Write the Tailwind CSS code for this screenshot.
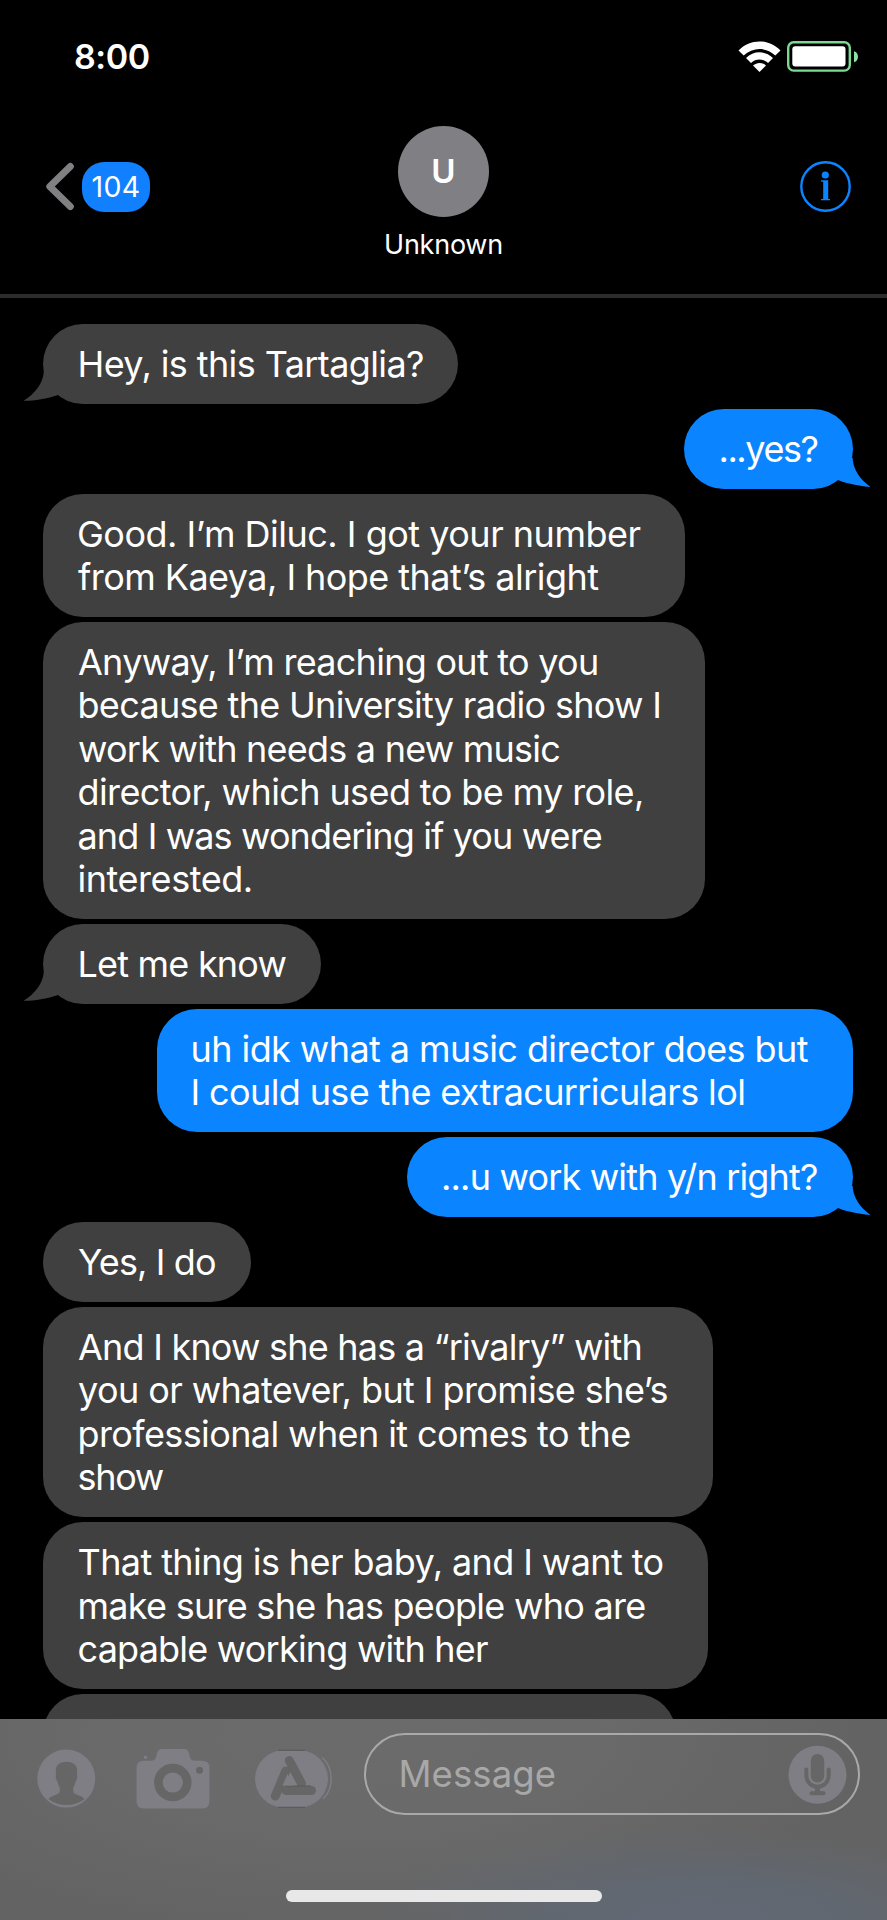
<!DOCTYPE html>
<html lang="en">
<head>
<meta charset="utf-8">
<title>Messages</title>
<script src="https://cdn.jsdelivr.net/npm/@tailwindcss/browser@4"></script>
</head>
<body class="bg-black text-white font-['Inter','Liberation_Sans',sans-serif]">
<div class="flex h-[1920px] w-[887px] flex-col overflow-hidden bg-black">

  <!-- Status bar -->
  <header class="flex h-[298px] shrink-0 flex-col border-b-[4px] border-[#2c2c2e]">
    <div class="flex h-[126px] items-start justify-between pl-[74px] pr-[28px]">
      <span class="mt-[36px] text-[34px] leading-[41px] font-semibold tracking-[-0.4px]">8:00</span>
      <div class="mt-[41px] flex gap-[6px]">
        <svg class="h-[31px] w-[43px]" viewBox="0 0 43 31" fill="#fff">
          <path d="M0.5 9.5C12 -2.6 31 -2.6 42.5 9.5L37.3 14.6C28.4 5.8 14.6 5.8 5.7 14.6Z"/>
          <path d="M8 17C15.6 9.4 27.4 9.4 35 17L30 22C25.2 17.4 17.8 17.4 13 22Z"/>
          <path d="M15 24.5C19 21 24 21 28 24.5L21.5 31Z"/>
        </svg>
        <svg class="h-[31px] w-[72px]" viewBox="0 0 72 31">
          <rect x="1.2" y="1.2" width="61.6" height="28.4" rx="5.5" fill="none" stroke="#7bd993" stroke-width="2.4"/>
          <rect x="5.3" y="5.2" width="53.2" height="20.2" rx="3" fill="#fff"/>
          <path d="M67 10.2C72.3 11.5 72.3 20 67 21.2Z" fill="#8be3a1"/>
        </svg>
      </div>
    </div>

    <!-- Conversation header -->
    <div class="grid grid-cols-[1fr_200px_1fr]">
      <div class="flex items-start pt-[35px] pl-[45px]">
        <svg class="mt-[1px] h-[49px] w-[30px]" viewBox="0 0 30 49" fill="none" stroke="#808083" stroke-width="7" stroke-linecap="round" stroke-linejoin="round"><path d="M25.3 4.5L4.8 24.5L25.3 44.5"/></svg>
        <span class="mt-[1px] ml-[7px] flex h-[50px] w-[68px] items-center justify-center rounded-[22px] bg-[#1180ff] text-[28.5px] tracking-[0.3px]">104</span>
      </div>
      <div class="flex flex-col items-center">
        <div class="flex h-[91px] w-[91px] items-center justify-center rounded-full bg-[#807f84] text-[33px] font-semibold">U</div>
        <div class="mt-[11px] text-[27px] leading-[33px] tracking-[-0.25px] whitespace-nowrap">Unknown</div>
      </div>
      <div class="flex justify-end pt-[35px] pr-[36px]">
        <svg class="h-[51px] w-[51px]" viewBox="0 0 51 51">
          <circle cx="25.5" cy="25.5" r="24.2" fill="none" stroke="#0a84ff" stroke-width="2.4"/>
          <circle cx="25.3" cy="14" r="3.6" fill="#0a84ff"/>
          <path d="M21 19.2H28.2V37.4Q28.2 38 30 38V39.2H21V38Q23.2 38 23.2 37.4V21Q23.2 20.4 21 20.4Z" fill="#0a84ff"/>
        </svg>
      </div>
    </div>
  </header>

  <!-- Messages -->
  <main class="flex h-[1421px] shrink-0 flex-col gap-[4.8px] overflow-hidden pt-[26px] pr-[34px] pl-[43px] text-[36px] leading-[43.5px] whitespace-nowrap">
    <div class="relative w-[414.5px] shrink-0 rounded-[40px] bg-[#404040] pt-[19px] pb-[17.5px] pl-[34.5px]">
      <svg class="absolute top-[46px] left-[-20px] h-[32px] w-[38px]" viewBox="0 0 38 32" fill="#404040"><path d="M20.8 2C20 13 12 24 0.5 30.8C10 31 24 29 35 25L38 2Z"/></svg>
      <p class="relative tracking-[-0.6px]">Hey, is this Tartaglia?</p>
    </div>
    <div class="relative w-[169px] shrink-0 self-end rounded-[40px] bg-[#0b84ff] pt-[19px] pb-[17.5px] pl-[34.5px]">
      <svg class="absolute top-[46px] right-[-18px] h-[34px] w-[36px]" viewBox="0 0 36 34" fill="#0b84ff"><path d="M17.6 3C18 13 24 24 35.5 32C28 31.5 12 29 3 25L0 3Z"/></svg>
      <p class="relative tracking-[-1.439px]">...yes?</p>
    </div>
    <div class="w-[641.5px] shrink-0 rounded-[40px] bg-[#404040] pt-[19px] pb-[17.5px] pl-[34px]">
      <p class="tracking-[-0.496px]">Good. I’m Diluc. I got your number</p>
      <p class="pl-[1px] tracking-[-0.55px]">from Kaeya, I hope that’s alright</p>
    </div>
    <div class="w-[662px] shrink-0 rounded-[40px] bg-[#404040] pt-[19px] pb-[17.5px] pl-[34px]">
      <p class="pl-[1px] tracking-[-0.722px]">Anyway, I’m reaching out to you</p>
      <p class="pl-[0.5px] tracking-[-0.69px]">because the University radio show I</p>
      <p class="pl-[1px] tracking-[-0.77px]">work with needs a new music</p>
      <p class="pl-[0.5px] tracking-[-0.6px]">director, which used to be my role,</p>
      <p class="pl-[0.5px] tracking-[-0.88px]">and I was wondering if you were</p>
      <p class="pl-[0.5px] tracking-[-0.45px]">interested.</p>
    </div>
    <div class="relative w-[278px] shrink-0 rounded-[40px] bg-[#404040] pt-[19px] pb-[17.5px] pl-[34.5px]">
      <svg class="absolute top-[46px] left-[-20px] h-[32px] w-[38px]" viewBox="0 0 38 32" fill="#404040"><path d="M20.8 2C20 13 12 24 0.5 30.8C10 31 24 29 35 25L38 2Z"/></svg>
      <p class="relative tracking-[-0.786px]">Let me know</p>
    </div>
    <div class="w-[696.5px] shrink-0 self-end rounded-[40px] bg-[#0b84ff] pt-[19px] pb-[17.5px] pl-[34px]">
      <p class="tracking-[-0.57px]">uh idk what a music director does but</p>
      <p class="tracking-[-0.62px]">I could use the extracurriculars lol</p>
    </div>
    <div class="relative w-[446.5px] shrink-0 self-end rounded-[40px] bg-[#0b84ff] pt-[19px] pb-[17.5px] pl-[34.5px]">
      <svg class="absolute top-[46px] right-[-18px] h-[34px] w-[36px]" viewBox="0 0 36 34" fill="#0b84ff"><path d="M17.6 3C18 13 24 24 35.5 32C28 31.5 12 29 3 25L0 3Z"/></svg>
      <p class="relative tracking-[-0.826px]">...u work with y/n right?</p>
    </div>
    <div class="w-[208px] shrink-0 rounded-[40px] bg-[#404040] pt-[19px] pb-[17.5px] pl-[35px]">
      <p class="tracking-[-0.875px]">Yes, I do</p>
    </div>
    <div class="w-[669.5px] shrink-0 rounded-[40px] bg-[#404040] pt-[19px] pb-[17.5px] pl-[34px]">
      <p class="pl-[1px] tracking-[-0.778px]">And I know she has a “rivalry” with</p>
      <p class="pl-[1px] tracking-[-0.58px]">you or whatever, but I promise she’s</p>
      <p class="pl-[0.5px] tracking-[-0.61px]">professional when it comes to the</p>
      <p class="pl-[0.5px] tracking-[-1.3px]">show</p>
    </div>
    <div class="w-[665px] shrink-0 rounded-[40px] bg-[#404040] pt-[19px] pb-[17.5px] pl-[34px]">
      <p class="pl-[0.5px] tracking-[-0.598px]">That thing is her baby, and I want to</p>
      <p class="pl-[0.5px] tracking-[-0.73px]">make sure she has people who are</p>
      <p class="pl-[0.5px] tracking-[-0.792px]">capable working with her</p>
    </div>
    <div class="h-[167px] w-[633px] shrink-0 rounded-[40px] bg-[#404040]"></div>
  </main>

  <!-- Composer -->
  <footer class="flex h-[201px] shrink-0 flex-col items-center bg-[#636363] bg-[radial-gradient(ellipse_330px_90px_at_700px_201px,#616975_0%,#616975cc_40%,transparent_100%),radial-gradient(ellipse_520px_200px_at_350px_20px,#6b6b6b_0%,#6a6a6a_45%,transparent_100%)]">
    <div class="flex w-full pt-[14px] pr-[27px] pl-[37px]">
      <svg class="mt-[16px] h-[59px] w-[59px]" viewBox="0 0 59 59">
        <circle cx="29.3" cy="29.6" r="29" fill="#7f7e84"/>
        <path d="M29.5 12.8C24 12.8 19 15.5 18.8 21C18.7 23.5 19.3 26 18.7 28C18.9 31 20.5 32 21 34.5C21.6 37 22.8 38 23 40L22.5 43.5C20 46.5 14.5 46 11.5 50C21.5 58 37.5 58 47.5 50C44.5 46 39 46.5 36.5 43.5L36 40C36.2 38 37.4 37 38 34.5C38.5 32 40.1 31 40.3 28C39.7 26 40.3 23.5 40.2 21C40 15.5 35 12.8 29.5 12.8Z" fill="#666"/>
      </svg>
      <svg class="mt-[16px] ml-[40px] h-[60px] w-[74px]" viewBox="0 0 74 60">
        <path d="M8 11.7H15C19 11.7 19.5 10 20.5 6.500C21.500 2 22.500 0 26 0H48C51.500 0 52.500 2 53.500 6.500C54.500 10 55 11.700 59 11.700H66Q73.500 11.700 73.500 19V52Q73.500 59.500 66 59.500H8Q0.500 59.500 0.500 52V19Q0.500 11.700 8 11.700Z" fill="#7f7e84"/>
        <circle cx="9.500" cy="8.300" r="1.700" fill="#7f7e84"/>
        <circle cx="36.800" cy="33.500" r="14.400" fill="none" stroke="#666" stroke-width="8.600"/>
        <circle cx="63.500" cy="21.300" r="3.500" fill="#666"/>
      </svg>
      <svg class="mt-[16px] ml-[44px] h-[60px] w-[80px]" viewBox="0 0 80 60">
        <rect x="1" y="1.300" width="73" height="57" rx="28.500" fill="#7f7e84"/>
        <path d="M24 1.300H51M24 58.300H51" stroke="#58585a" stroke-width="1" fill="none"/>
        <path d="M68 8.500C79.500 18 80.500 39 69 50" stroke="#7f7e84" stroke-width="1.500" fill="none"/>
        <g stroke="#666" stroke-width="9" stroke-linecap="round">
          <path d="M35.300 11.500L47.500 34.500"/>
          <path d="M31.800 22L21.300 47"/>
          <path d="M32 41.500H57.500"/>
        </g>
        <path d="M31 37H57" stroke="#58585a" stroke-width="1"/>
        <path d="M33.500 25L39 36.500H28.500Z" fill="#7f7e84"/>
      </svg>
      <div class="ml-[30px] flex h-[82px] w-[496px] items-center justify-between rounded-full border-2 border-[#a9a9a9] pr-[11px] pl-[32.500px]">
        <span class="text-[36.500px] tracking-[0.1px] text-[#a8a8a8]">Message</span>
        <svg class="h-[59px] w-[59px]" viewBox="0 0 59 59">
          <circle cx="29.500" cy="29.800" r="29" fill="#7f7e84"/>
          <rect x="22.800" y="9" width="13.400" height="28.500" rx="6.700" fill="#666"/>
          <path d="M18.300 24.500V30C18.300 45.500 40.700 45.500 40.700 30V24.500" fill="none" stroke="#666" stroke-width="4" stroke-linecap="round"/>
          <path d="M29.500 42V48" stroke="#666" stroke-width="5"/>
          <path d="M23.500 48.300H35.500" stroke="#666" stroke-width="4" stroke-linecap="round"/>
        </svg>
      </div>
    </div>
    <div class="mt-[75px] h-[12px] w-[316px] rounded-full bg-[#e8e8e8]"></div>
  </footer>
</div>
</body>
</html>
